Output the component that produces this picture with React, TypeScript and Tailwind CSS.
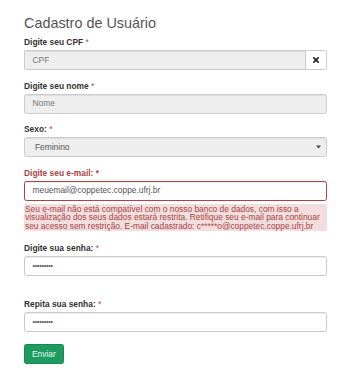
import React from 'react';

function Req() {
  return <span className="text-[#a94442] font-normal"> *</span>;
}

function Label({ children, error }: { children: React.ReactNode; error?: boolean }) {
  return (
    <div
      className={`h-[12px] mb-[2px] text-[8.4px] leading-[12px] font-bold ${
        error ? 'text-[#a94442]' : 'text-[#333]'
      }`}
    >
      {children}
    </div>
  );
}

function Field({ value, disabled, dots }: { value: string; disabled?: boolean; dots?: boolean }) {
  return (
    <div
      className={`h-[20px] flex items-center px-[7.5px] border border-[#ccc] rounded-[2.4px] shadow-[inset_0_1px_1px_rgba(0,0,0,0.075)] ${
        disabled ? 'bg-[#eee] text-[#777]' : 'bg-white text-[#555]'
      } ${dots ? 'text-[7px] tracking-[-0.2px]' : 'text-[8.4px]'}`}
    >
      {value}
    </div>
  );
}

export default function App() {
  return (
    <div className="w-[352px] h-[373px] bg-white pt-[15px] pl-[24px] pr-[25px] font-['Liberation_Sans',Arial,sans-serif]">
      <h3 className="text-[14.4px] leading-[16px] mb-[5px] text-[#555]">Cadastro de Usuário</h3>

      {/* CPF */}
      <div className="mb-[9.5px]">
        <Label>
          Digite seu CPF<Req />
        </Label>
        <div className="flex">
          <div className="flex-1 h-[20px] flex items-center px-[7.5px] border border-[#ccc] border-r-0 rounded-l-[2.4px] bg-[#eee] text-[#777] text-[8.4px] shadow-[inset_0_1px_1px_rgba(0,0,0,0.075)]">
            CPF
          </div>
          <div className="w-[22px] h-[20px] flex items-center justify-center border border-[#ccc] rounded-r-[2.4px] bg-white">
            <svg width="6" height="6" viewBox="0 0 10 10">
              <path d="M1.5 1.5 L8.5 8.5 M8.5 1.5 L1.5 8.5" stroke="#222" strokeWidth="2.8" strokeLinecap="square" />
            </svg>
          </div>
        </div>
      </div>

      {/* Nome */}
      <div className="mb-[9.5px]">
        <Label>
          Digite seu nome<Req />
        </Label>
        <Field value="Nome" disabled />
      </div>

      {/* Sexo */}
      <div className="mb-[9.5px]">
        <Label>
          Sexo:<Req />
        </Label>
        <div className="h-[20px] flex items-center justify-between pl-[10px] pr-[5px] border border-[#ccc] rounded-[2.4px] bg-[#eee] text-[#555] text-[8.4px] shadow-[inset_0_1px_1px_rgba(0,0,0,0.075)]">
          <span>Feminino</span>
          <svg width="5" height="4" viewBox="0 0 5 4">
            <path d="M0 0.5 H5 L2.5 3.5 Z" fill="#444" />
          </svg>
        </div>
      </div>

      {/* Email */}
      <div className="mb-[11px]">
        <Label error>Digite seu e-mail: *</Label>
        <div className="h-[20px] flex items-center px-[7.5px] border border-[#a94442] rounded-[2.4px] bg-white text-[#555] text-[8.4px] shadow-[inset_0_1px_1px_rgba(0,0,0,0.075)]">
          meuemail@coppetec.coppe.ufrj.br
        </div>
        <div className="mt-[3px] px-[1px] py-[1px] rounded-[2px] bg-[#f2dede] text-[#a94442] text-[8.4px] leading-[8.6px] whitespace-nowrap">
          Seu e-mail não está compatível com o nosso banco de dados, com isso a
          <br />
          visualização dos seus dados estará restrita. Retifique seu e-mail para continuar
          <br />
          seu acesso sem restrição. E-mail cadastrado: c*****o@coppetec.coppe.ufrj.br
        </div>
      </div>

      {/* Senha */}
      <div className="mb-[22px]">
        <Label>
          Digite sua senha:<Req />
        </Label>
        <Field value="•••••••••" dots />
      </div>

      {/* Repita */}
      <div className="mb-[8px]">
        <Label>
          Repita sua senha:<Req />
        </Label>
        <Field value="•••••••••" dots />
      </div>

      <button className="h-[20px] px-[7px] rounded-[2.4px] bg-[#1c9c5e] border border-[#178a52] text-[#eef7f0] text-[8.4px] leading-none">
        Enviar
      </button>
    </div>
  );
}
